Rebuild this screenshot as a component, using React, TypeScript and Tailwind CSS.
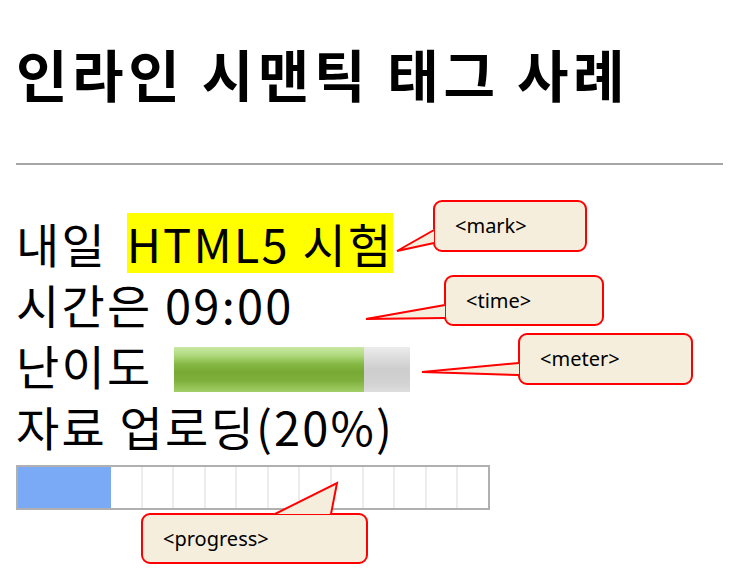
const font = "font-['Noto_Sans_CJK_KR','Noto_Sans',sans-serif]";

/* callout boxes: position is the content (annotations over the page) */
const callouts = [
  { label: "<mark>", box: "left-[433px] top-[200px] w-[154px] h-[52px]" },
  { label: "<time>", box: "left-[444px] top-[275px] w-[160px] h-[51px]" },
  { label: "<meter>", box: "left-[518px] top-[333px] w-[175px] h-[52px]" },
  { label: "<progress>", box: "left-[141px] top-[513px] w-[227px] h-[51px]" },
];

// tails: [base1, tip, base2]
const tails = [
  { fill: "434,229 397,251 434,244", line: "434,230 397,251 434,243" },
  { fill: "445,304 366,319 445,319", line: "445,305 366,319 445,318" },
  { fill: "519,362 422,372 519,376", line: "519,363 422,372 519,375" },
  { fill: "274,514 337,483 330,514", line: "275,514 337,483 331,514" },
];

function Meter() {
  return (
    <span className="inline-flex w-[236px] h-[45px] align-[-7px] ml-[22px] bg-[linear-gradient(to_bottom,#ececec_0%,#dcdcdc_25%,#cdcdcd_50%,#d2d2d2_80%,#dedede_100%)]">
      <span className="block w-[190px] h-full bg-[linear-gradient(to_bottom,#c9e8a6_0%,#b0da7d_18%,#86b845_38%,#77a934_55%,#7fb03c_75%,#a2cf68_100%)]" />
    </span>
  );
}

function Progress() {
  const cells = Array.from({ length: 15 }, (_, i) => i);
  return (
    <div className="mt-[9px] w-[474px] h-[45px] border-2 border-[#b0b0b0] flex bg-white">
      <div className="w-[93px] h-full bg-[#7aa9f6]" />
      {cells.slice(3).map((i) => (
        <div
          key={i}
          className={`flex-1 h-full ${i > 3 ? "border-l-2 border-[#ececec]" : ""}`}
        />
      ))}
    </div>
  );
}

export default function App() {
  return (
    <div className={`relative w-[731px] h-[587px] overflow-hidden bg-white text-black ${font}`}>
      <div className="pl-4 pr-2">
        <h1 className="mt-[33px] text-[56px] leading-[80px] font-bold tracking-[4.6px]">인라인 시맨틱 태그 사례</h1>
        <hr className="mt-[50px] border-0 border-t-2 border-[#a6a6a6]" />

        <div className="mt-[47px] text-[47px] leading-[61px] tracking-[2.2px]">
          <div>
            내일{" "}
            <mark className="inline-block leading-[60px] ml-[7px] bg-[#ffff00] text-black">HTML5 시험</mark>
          </div>
          <div>
            시간은 <time>09:00</time>
          </div>
          <div>
            난이도
            <Meter />
          </div>
          <div>자료 업로딩(20%)</div>
        </div>
        <Progress />
      </div>

      {/* callouts */}
      {callouts.map((c) => (
        <div
          key={c.label}
          className={`absolute ${c.box} flex items-center pl-5 rounded-[9px] border-2 border-[#ff0000] bg-[#f6eedd] text-[20px] text-black font-['Noto_Sans',sans-serif]`}
        >
          {c.label}
        </div>
      ))}
      <svg className="absolute inset-0 pointer-events-none" width="731" height="587">
        {tails.map((t, i) => (
          <g key={i}>
            <polygon points={t.fill} fill="#f6eedd" />
            <polyline points={t.line} fill="none" stroke="#ff0000" strokeWidth="2" strokeLinejoin="miter" />
          </g>
        ))}
      </svg>
    </div>
  );
}
